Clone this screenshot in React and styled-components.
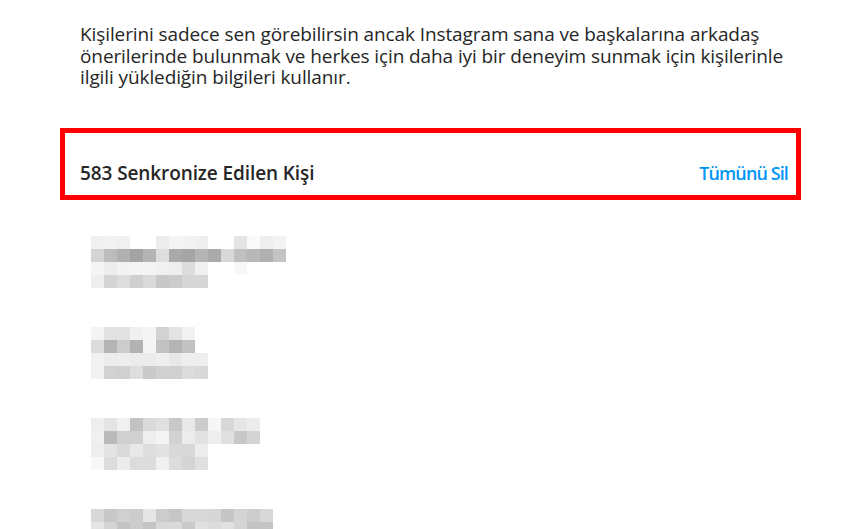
import React from 'react';
import styled, { createGlobalStyle } from 'styled-components';

const GlobalStyle = createGlobalStyle`
  html, body {
    margin: 0;
    padding: 0;
    background: #ffffff;
    overflow: hidden;
  }
  body {
    font-family: "Open Sans", "Noto Sans", sans-serif;
    color: #262626;
  }
`;

const Page = styled.main`
  height: 529px;
  overflow: hidden;
  padding: 0 78px 0 80px;
`;

const Description = styled.p`
  margin: 0;
  padding-top: 24px;
  font-size: 19px;
  line-height: 21.5px;
  letter-spacing: -0.1px;
  color: #262626;
`;

const HeaderRow = styled.div`
  box-sizing: border-box;
  height: 72px;
  margin: 39px -13px 0 -20px;
  border: 5px solid #ff0000;
  padding: 0 8px 11px 15px;
  display: flex;
  align-items: flex-end;
  justify-content: space-between;
`;

const Title = styled.h2`
  margin: 0;
  font-size: 19px;
  line-height: 22px;
  font-weight: 600;
  letter-spacing: -0.1px;
  color: #262626;
`;

const DeleteAll = styled.button`
  border: 0;
  background: none;
  padding: 0;
  font-family: inherit;
  font-size: 18px;
  line-height: 22px;
  font-weight: 600;
  letter-spacing: -0.9px;
  color: #0095f6;
  cursor: pointer;
`;

const ContactList = styled.ul`
  list-style: none;
  margin: 36px 0 0 11px;
  padding: 0;
  display: flex;
  flex-direction: column;
  gap: 39px;
`;

const BlurredContact = styled.li`
  display: flex;
  flex-direction: column;
`;

const PixelRow = styled.div`
  display: flex;
  height: 13px;
`;

const Pixel = styled.span`
  width: 13px;
  height: 13px;
  background: ${(p) => `#${p.$g}${p.$g}${p.$g}`};
`;

const contacts = [
  [
    'f0 f2 f0 ff ff ec f4 f2 ef ff ff e5 fa ee f3',
    'd4 bc b0 a4 b4 de aa a6 b4 aa d8 c0 b8 b0 c4',
    'f4 ed f2 f4 f4 f0 ee dc f0 ff ff f8',
    'ee d4 dd cf da c8 cc d6 d6',
  ],
  [
    'f4 e2 e2 f0 f4 d2 e4 f2',
    'dc b4 cc b2 f4 c2 b4 c2',
    'f2 ec ee ec eb ee e8 ee ee',
    'f2 d2 d0 de ca d0 d0 dc d8',
  ],
  [
    'ee e4 f0 c2 da e0 c8 e8 cc f6 d8 e6 ec',
    'f0 ba d0 d0 ee f4 d2 ec e2 ee e0 c8 d4',
    'ee e4 da e8 de e2 d8 d8 ec',
    'f8 dc ec dc dc f0 dc d4 e0',
  ],
  [
    'd8 c8 d0 cc e6 cc c6 d8 d8 d6 c6 d4 cc d8',
    'e4 d4 c4 cc c4 d8 da ca e0 dc e0 d4 c4 c4',
    'ee e6 ec e4 f0 ea e8 ee',
    'e0 d4 dc d8 d0 dc e2 d6 dc',
  ],
];

export default function App() {
  return (
    <>
      <GlobalStyle />
      <Page>
        <Description>
          Kişilerini sadece sen görebilirsin ancak Instagram sana ve başkalarına arkadaş
          <br />
          önerilerinde bulunmak ve herkes için daha iyi bir deneyim sunmak için kişilerinle
          <br />
          ilgili yüklediğin bilgileri kullanır.
        </Description>
        <HeaderRow>
          <Title>583 Senkronize Edilen Kişi</Title>
          <DeleteAll>Tümünü Sil</DeleteAll>
        </HeaderRow>
        <ContactList>
          {contacts.map((rows, i) => (
            <BlurredContact key={i}>
              {rows.map((row, r) => (
                <PixelRow key={r}>
                  {row.split(' ').map((g, c) => (
                    <Pixel key={c} $g={g} />
                  ))}
                </PixelRow>
              ))}
            </BlurredContact>
          ))}
        </ContactList>
      </Page>
    </>
  );
}
